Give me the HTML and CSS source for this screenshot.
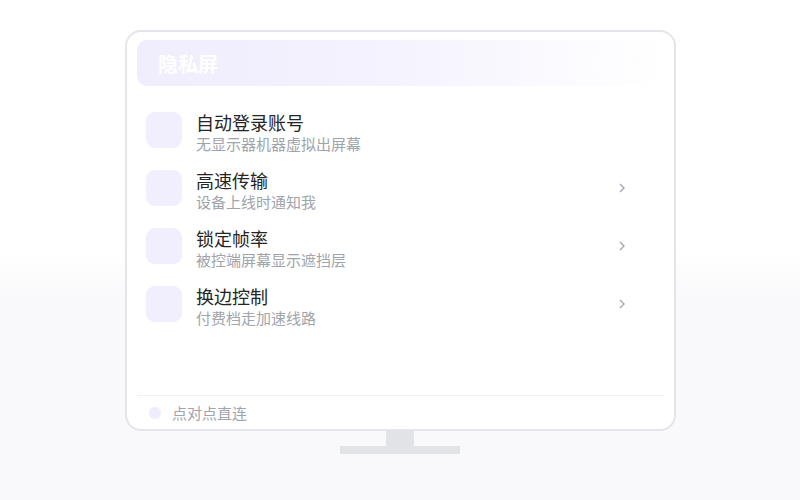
FILE: index.html
```html
<html>
    <head>
        <title>隐私屏</title>
        <link rel="stylesheet" href="styles.css">
    </head>
    <body>
        <div class="monitor">
            <div class="header">
                <span class="title">隐私屏</span>
                <span class="dots"><i></i><i></i><i></i></span>
            </div>
            <div class="list">
                <div class="row">
                    <div class="icon"></div>
                    <div class="text">
                        <div class="name">自动登录账号</div>
                        <div class="desc">无显示器机器虚拟出屏幕</div>
                    </div>
                </div>
                <div class="row">
                    <div class="icon"></div>
                    <div class="text">
                        <div class="name">高速传输</div>
                        <div class="desc">设备上线时通知我</div>
                    </div>
                    <svg class="arrow" width="6" height="10" viewBox="0 0 6 10"><path d="M1 1 L5 5 L1 9" fill="none" stroke="#a3a8b0" stroke-width="1.4"/></svg>
                </div>
                <div class="row">
                    <div class="icon"></div>
                    <div class="text">
                        <div class="name">锁定帧率</div>
                        <div class="desc">被控端屏幕显示遮挡层</div>
                    </div>
                    <svg class="arrow" width="6" height="10" viewBox="0 0 6 10"><path d="M1 1 L5 5 L1 9" fill="none" stroke="#a3a8b0" stroke-width="1.4"/></svg>
                </div>
                <div class="row">
                    <div class="icon"></div>
                    <div class="text">
                        <div class="name">换边控制</div>
                        <div class="desc">付费档走加速线路</div>
                    </div>
                    <svg class="arrow" width="6" height="10" viewBox="0 0 6 10"><path d="M1 1 L5 5 L1 9" fill="none" stroke="#a3a8b0" stroke-width="1.4"/></svg>
                </div>
            </div>
            <div class="footer">
                <span class="dot"></span>
                <span class="footer-text">点对点直连</span>
            </div>
        </div>
        <div class="neck"></div>
        <div class="base"></div>
    </body>
</html>
```

FILE: styles.css
```css
body {
    margin: 0;
    height: 500px;
    display: flex;
    flex-direction: column;
    align-items: center;
    background: linear-gradient(to bottom, #ffffff 0px, #ffffff 250px, #f9f9fb 300px, #f9f9fb 500px);
    font-family: "Noto Sans CJK SC", "Noto Sans", sans-serif;
}

.monitor {
    margin-top: 30px;
    margin-left: 1px;
    width: 527px;
    height: 397px;
    border: 2px solid #e3e5ea;
    border-radius: 16px;
    background-color: #ffffff;
    display: flex;
    flex-direction: column;
    padding: 0 10px;
}

.header {
    margin-top: 8px;
    height: 46px;
    border-radius: 10px;
    background: linear-gradient(to right, #f0edfd 0%, #f5f3fe 50%, #ffffff 100%);
    display: flex;
    align-items: center;
    justify-content: space-between;
    padding: 0 22px 0 21px;
}

.title {
    color: #ffffff;
    font-size: 20px;
    font-weight: bold;
}

.dots {
    display: flex;
    gap: 14px;
    margin-right: 2px;
}

.dots i {
    width: 8px;
    height: 8px;
    border-radius: 50%;
    background-color: #fdfdff;
}

.list {
    flex: 1;
    padding-top: 26px;
}

.row {
    height: 58px;
    display: flex;
    align-items: flex-start;
    padding-left: 9px;
}

.icon {
    width: 36px;
    height: 36px;
    border-radius: 9px;
    background-color: #f1effd;
}

.text {
    flex: 1;
    margin-left: 14px;
    margin-top: -2px;
}

.name {
    font-size: 18px;
    color: #252525;
    line-height: 24px;
}

.desc {
    font-size: 15px;
    color: #a0a4ab;
    line-height: 19px;
}

.arrow {
    margin-right: 39px;
    margin-top: 13px;
}

.footer {
    border-top: 1px solid #eef0f3;
    height: 33px;
    display: flex;
    align-items: center;
    padding-left: 12px;
}

.dot {
    width: 12px;
    height: 12px;
    border-radius: 50%;
    background-color: #efecfd;
}

.footer-text {
    margin-left: 11px;
    font-size: 15px;
    color: #a0a4ab;
}

.neck {
    width: 28px;
    height: 15px;
    background-color: #e1e3e7;
}

.base {
    width: 120px;
    height: 8px;
    background-color: #e1e3e7;
}
```
